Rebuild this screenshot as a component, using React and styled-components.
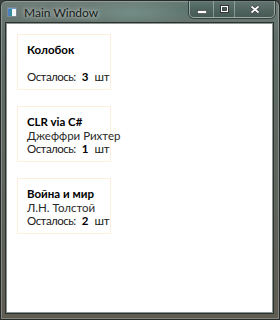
import React from 'react';
import styled, { createGlobalStyle } from 'styled-components';

const GlobalStyle = createGlobalStyle`
  html, body {
    margin: 0;
    padding: 0;
    background: #3d4440;
  }
`;

const books = [
  { title: 'Колобок', author: '', left: 3 },
  { title: 'CLR via C#', author: 'Джеффри Рихтер', left: 1 },
  { title: 'Война и мир', author: 'Л.Н. Толстой', left: 2 },
];

const Frame = styled.div`
  width: 280px;
  height: 320px;
  box-sizing: border-box;
  border: 1px solid #262a28;
  border-radius: 6px 6px 0 0;
  background:
    radial-gradient(ellipse 60px 14px at 130px 12px, rgba(120, 160, 150, 0.55), transparent),
    radial-gradient(ellipse 70px 12px at 200px 8px, rgba(70, 110, 100, 0.5), transparent),
    linear-gradient(180deg, #6f7d78 0%, #5f6c67 12%, #5e625b 70%, #5f5c52 100%);
  box-shadow: inset 0 0 0 1px rgba(200, 210, 205, 0.35);
  display: flex;
  flex-direction: column;
  padding: 0 6px 6px 5px;
  font-family: Lato, 'Noto Sans', sans-serif;
`;

const TitleBar = styled.div`
  height: 21px;
  display: flex;
  align-items: flex-start;
`;

const AppIcon = styled.svg`
  margin: 6px 0 0 1px;
  flex-shrink: 0;
`;

const Caption = styled.span`
  margin: 4px 0 0 7px;
  font-size: 12px;
  line-height: 16px;
  color: #151a18;
  text-shadow: 0 0 6px rgba(235, 245, 240, 0.7), 0 0 3px rgba(235, 245, 240, 0.6);
  flex: 1;
`;

const Buttons = styled.div`
  display: flex;
  height: 16px;
  margin-right: -2px;
  border: 1px solid rgba(210, 220, 215, 0.55);
  border-top: none;
  border-radius: 0 0 5px 5px;
  overflow: hidden;
  background: linear-gradient(180deg, rgba(90, 110, 105, 0.6), rgba(50, 70, 65, 0.6));
  box-shadow: 0 0 0 1px rgba(20, 30, 28, 0.6);
`;

const CtlButton = styled.div`
  width: ${({ $w }) => $w}px;
  display: flex;
  align-items: center;
  justify-content: center;
  border-left: ${({ $first }) => ($first ? 'none' : '1px solid rgba(210, 220, 215, 0.45)')};
`;

const Client = styled.div`
  flex: 1;
  background: #ffffff;
  border: 1px solid #8b9593;
  box-shadow: 0 0 0 1px #2e302c;
  margin-top: 1px;
  padding: 10px;
  display: flex;
  flex-direction: column;
  align-items: flex-start;
  gap: 16px;
`;

const Card = styled.div`
  width: 94px;
  height: 56px;
  box-sizing: border-box;
  border: 1px solid #fdeede;
  padding: 8px 0 0 9px;
  font-size: 11.5px;
  line-height: 13.5px;
  color: #202020;
`;

const Title = styled.div`
  font-weight: bold;
  color: #000;
`;

const Author = styled.div`
  min-height: 13.5px;
  white-space: nowrap;
  color: #2a2a2a;
`;

const Remain = styled.div`
  display: flex;
  gap: 6px;
  white-space: nowrap;
`;

const Label = styled.span`
  letter-spacing: -0.5px;
`;

const Count = styled.span`
  font-weight: bold;
  color: #000;
`;

export default function App() {
  return (
    <>
      <GlobalStyle />
      <Frame>
        <TitleBar>
          <AppIcon width="10" height="10" viewBox="0 0 10 10">
            <rect x="0.5" y="0.5" width="9" height="9" fill="#f4f6f8" stroke="#7a8690" />
            <rect x="1" y="2" width="4" height="7" fill="#2f8f9a" />
            <rect x="1" y="2" width="2" height="7" fill="#4d7fc0" />
            <rect x="1" y="1" width="8" height="1" fill="#6d9ad0" />
          </AppIcon>
          <Caption>Main Window</Caption>
          <Buttons>
            <CtlButton $w={23} $first>
              <svg width="10" height="4" viewBox="0 0 10 4" style={{ marginTop: 5 }}>
                <rect x="0.5" y="0.5" width="9" height="3" fill="#fff" stroke="#333" strokeWidth="0.6" />
              </svg>
            </CtlButton>
            <CtlButton $w={20}>
              <svg width="9" height="8" viewBox="0 0 9 8">
                <rect x="0.5" y="0.5" width="8" height="7" fill="none" stroke="#333" strokeWidth="1" />
                <rect x="1.5" y="1.5" width="6" height="5" fill="none" stroke="#fff" strokeWidth="1" />
                <rect x="2.5" y="3" width="4" height="2.5" fill="none" stroke="#333" strokeWidth="0.6" />
              </svg>
            </CtlButton>
            <CtlButton $w={39}>
              <svg width="10" height="9" viewBox="0 0 10 9">
                <path d="M1.5 1.5 L8.5 7.5 M8.5 1.5 L1.5 7.5" stroke="#333" strokeWidth="3" />
                <path d="M1.5 1.5 L8.5 7.5 M8.5 1.5 L1.5 7.5" stroke="#fff" strokeWidth="1.8" />
              </svg>
            </CtlButton>
          </Buttons>
        </TitleBar>
        <Client>
          {books.map((b) => (
            <Card key={b.title}>
              <Title>{b.title}</Title>
              <Author>{b.author}</Author>
              <Remain>
                <Label>Осталось:</Label>
                <Count>{b.left}</Count>
                <span>шт</span>
              </Remain>
            </Card>
          ))}
        </Client>
      </Frame>
    </>
  );
}
